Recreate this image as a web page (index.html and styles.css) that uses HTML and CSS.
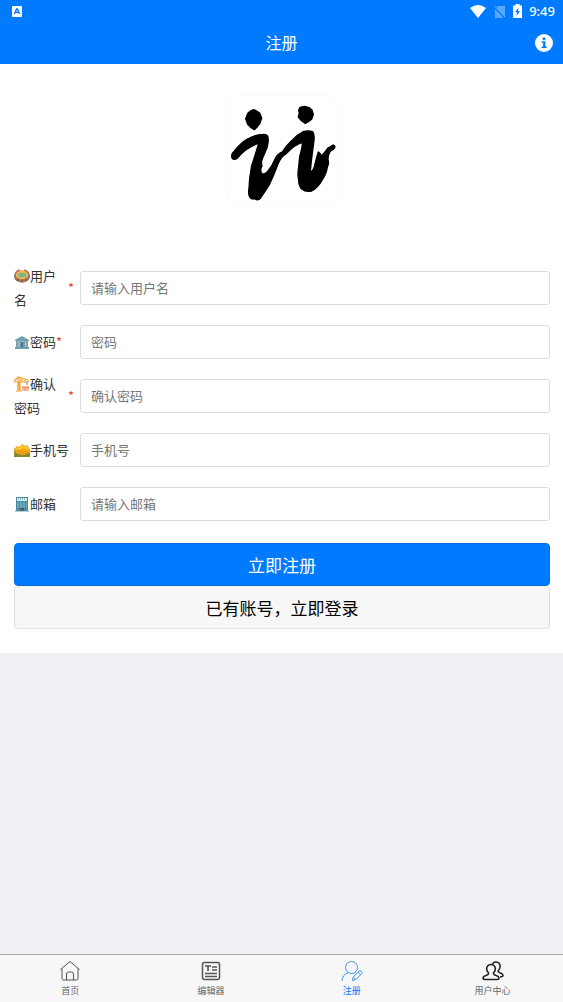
FILE: index.html
```html
<!DOCTYPE html>
<html lang="zh-CN">
<head>
  <meta charset="UTF-8">
  <meta name="viewport" content="width=device-width, initial-scale=1.0">
  <title>注册</title>
  <link rel="stylesheet" href="styles.css">
</head>
<body>
  <header class="header">
    <div class="status-bar">
      <svg class="status-app" width="10" height="11" viewBox="0 0 10 11">
        <rect width="10" height="11" rx="1" fill="#fff"/>
        <path d="M2.5 8 4.6 3h.8L7.5 8M3.4 6.4h3.2" fill="none" stroke="#007aff" stroke-width="1.4"/>
      </svg>
      <svg width="16" height="13" viewBox="0 0 16 13">
        <path d="M0 3Q8-3 16 3L8 13z" fill="#fff"/>
      </svg>
      <svg class="status-sim" width="11" height="13" viewBox="0 0 11 13">
        <path d="M4 1h7v12H1V4z" fill="#fff" opacity=".35"/>
        <path d="M0 1.5 11 13" stroke="#007aff" stroke-width="2"/>
        <path d="M0 .5 11 12" stroke="#fff" stroke-width="1" opacity=".4"/>
      </svg>
      <svg class="status-battery" width="9" height="14" viewBox="0 0 9 14">
        <path d="M0 1.5h2.5V0h4v1.5H9V14H0z" fill="#fff"/>
        <path d="M5.5 3.5 2 8.3h2L3.5 12 7 7H5z" fill="#007aff"/>
      </svg>
      <span class="time">9:49</span>
    </div>
    <div class="title-bar">
      <h1>注册</h1>
      <button class="info-button" type="button" aria-label="说明">
        <svg width="18" height="18" viewBox="0 0 18 18">
          <circle cx="9" cy="9" r="9" fill="#fff"/>
          <circle cx="9" cy="4.7" r="1.5" fill="#007aff"/>
          <path d="M6.7 7.2h3.7v5.2h1.3V14H6.6v-1.6h1.5V8.800H6.700z" fill="#007aff"/>
        </svg>
      </button>
    </div>
  </header>

  <main class="content">
    <svg class="logo" width="113" height="113" viewBox="33 27 339 339" role="img" aria-label="logo">
      <rect x="35" y="29" width="335" height="335" rx="45" fill="#fff" stroke="#f8f8f8" stroke-width="2"/>
      <g stroke="#000" stroke-width="4" stroke-linejoin="round">
        <path d="M117 74 125 78 134 84 140 99 135 115 127 125 118 134 107 127 98 118 92 101 99 84 108 77z"/>
        <path d="M255 67 268 64 283 68 291 75 295 88 290 103 279 111 271 115 258 106 250 96 253 84 251 76z"/>
        <path d="M50 212Q51 203 59 197 77 174 96 163 121 148 144 148 158 147 159 157 161 169 157 185 150 203 143 219 137 232 141 243 134 253 140 266 149 270 158 259 172 243 179 224 187 206 202 201 213 183 231 166 248 148 265 140 280 136 293 140 299 149 297 166L293 197 289 228 286 259Q292 262 298 245L305 217 310 201 316 206 319 213 330 201 339 189 354 180Q360 181 360 187 357 194 347 198 339 207 339 224 343 236 337 246 334 268 322 284 309 308 290 318 272 322 260 312 251 302 251 285 247 267 251 246L254 215 260 191 263 172Q239 178 214 206 198 214 188 239L177 268 163 299 149 321 137 339Q129 348 119 341 109 345 104 336 99 328 102 310L104 281 110 242 121 208 131 175Q112 180 91 196 80 205 70 216 63 225 54 222 49 219 50 212z"/>
      </g>
    </svg>

    <form class="register-form">
      <div class="form-row">
        <label for="username">
          <span>
            <svg class="emoji" viewBox="0 0 16 16">
              <ellipse cx="8" cy="8.4" rx="8" ry="6" fill="#637b87"/>
              <path d="M1 9h14q-1 5-7 5.4Q2 14 1 9z" fill="#d57042"/>
              <path d="M4 10v3M8 11v3M12 10v3" stroke="#48616f" stroke-width="1.4"/>
              <ellipse cx="8" cy="7" rx="6.2" ry="4.2" fill="#f9ba45"/>
              <ellipse cx="8" cy="7" rx="4.5" ry="2.5" fill="#7eb77f"/>
              <path d="M1 6.5Q2 3 6 2M15 6.5Q14 3 10 2" fill="none" stroke="#db604b" stroke-width="1.5"/>
            </svg>用户名</span><em>*</em>
        </label>
        <input type="text" id="username" name="username" placeholder="请输入用户名">
      </div>
      <div class="form-row">
        <label for="password">
          <span>
            <svg class="emoji" viewBox="0 0 16 16">
              <path d="M1 6 8 2l7 4v1H1zM1 13h14v2H1z" fill="#6e9fb0"/>
              <path d="M2 7h12v6H2z" fill="#a7c6d0"/>
              <path d="M3 7v6M6 7v6M10 7v6M13 7v6" stroke="#638b9b" stroke-width="1.2"/>
              <path d="M7 8h2v5H7z" fill="#52717e"/>
            </svg>密码</span><em>*</em>
        </label>
        <input type="password" id="password" name="password" placeholder="密码">
      </div>
      <div class="form-row">
        <label for="confirm">
          <span>
            <svg class="emoji" viewBox="0 0 16 16">
              <path d="M0 5 4 1l10 3v2H0zM4 1v14M6 2v13M4 6l2 2-2 2 2 2-2 2M8 3v3M11 4v2M2 15h6" fill="none" stroke="#f5a03c" stroke-width="1.2"/>
              <path d="M13 6v3" stroke="#70848d"/>
              <path d="M8 10h7v5H8z" fill="#f8c1a5"/>
              <path d="M8 12h7M10 10v2M13 10v2M11 12v3" stroke="#e48669" stroke-width=".7"/>
            </svg>确认密码</span><em>*</em>
        </label>
        <input type="password" id="confirm" name="confirm" placeholder="确认密码">
      </div>
      <div class="form-row">
        <label for="phone">
          <span>
            <svg class="emoji" viewBox="0 0 16 16">
              <path d="M0 7 3 4l2 1 3-3 3 2 2-1 2 3 1 2v6H0z" fill="#f5a713"/>
              <path d="M2 7l2-1 2 1 2-3 2 2 2-1 2 3" fill="none" stroke="#ffcf36" stroke-width="1.4"/>
              <path d="M0 8l2 3 3 1 4 1 4-1 3-2v5H0z" fill="#858a31"/>
              <path d="M4 11l3-2 3 3M12 8v4" fill="none" stroke="#d98b16"/>
            </svg>手机号</span>
        </label>
        <input type="tel" id="phone" name="phone" placeholder="手机号">
      </div>
      <div class="form-row">
        <label for="email">
          <span>
            <svg class="emoji" viewBox="0 0 16 16">
              <path d="M2 1h12v14H2z" fill="#4b8ba1"/>
              <path d="M3 2h10v3H3z" fill="#d9edf2"/>
              <path d="M4 3h8" stroke="#568b9e" stroke-dasharray="1 1"/>
              <path d="M3 7h10M3 9h10M3 11h10" stroke="#8fc4d4" stroke-dasharray="2 1"/>
              <path d="M6 12h4v3H6z" fill="#315e70"/>
              <path d="M1 15h14" stroke="#6a9bab"/>
            </svg>邮箱</span>
        </label>
        <input type="email" id="email" name="email" placeholder="请输入邮箱">
      </div>

      <div class="actions">
        <button class="btn btn-primary" type="submit">立即注册</button>
        <button class="btn btn-default" type="button">已有账号，立即登录</button>
      </div>
    </form>
  </main>

  <nav class="tab-bar">
    <a href="#home">
      <svg viewBox="0 0 22 22">
        <path d="M1.5 9.5 11 1.5l9.5 8M3 8.5v10Q3 20 4.5 20h13q1.500 0 1.500-1.500v-10M7.500 20v-6q0-2 2-2h3q2 0 2 2v6"/>
      </svg>
      <span>首页</span>
    </a>
    <a href="#editor">
      <svg viewBox="0 0 22 22">
        <rect x="2.5" y="2.5" width="17" height="17" rx="2" stroke-width="1.5"/>
        <path d="M5 6h6M8 6v5M12 7h5M12 10h5M5 13.500h12M5 16.500h12" stroke-width="1.7"/>
      </svg>
      <span>编辑器</span>
    </a>
    <a class="active" href="#register">
      <svg viewBox="0 0 22 22">
        <circle cx="10.5" cy="7.5" r="6"/>
        <path d="M1 21q0-6 6-8.300M11.500 20.500l.7-3.500 6-6q1-.8 2 .2l.6.600q.8 1 0 1.800l-6 6zM12.200 17l2.600 2.600M17 12.200l2.600 2.600"/>
      </svg>
      <span>注册</span>
    </a>
    <a class="user" href="#user">
      <svg viewBox="0 0 22 22">
        <path d="M6.500 13Q4 10.500 4.800 7.500 5.800 4.500 9 4.500t4.200 3Q14 10.500 11.500 13q-.5 1.500 2 2.200 3.500 1 3.500 2.800 0 1.500-2 1.500H3q-2 0-2-1.500 0-1.800 3.500-2.800 2.500-.7 2-2.200z"/>
        <path d="M10.500 4Q11.500 2 14 2q3 0 4 3 .7 3-1.700 5.500-.5 1.500 1.500 2.200 3.200 1 3.200 2.800 0 1.300-3 1.300"/>
      </svg>
      <span>用户中心</span>
    </a>
  </nav>
</body>
</html>
```
FILE: styles.css
```css
* {
  margin: 0;
  padding: 0;
  box-sizing: border-box;
}

body {
  font-family: "Noto Sans CJK SC", "Noto Sans", sans-serif;
  background: #efeff4;
  color: #333;
  min-height: 100vh;
  display: flex;
  flex-direction: column;
}

svg {
  display: block;
}

button {
  font-family: inherit;
  cursor: pointer;
}

.header {
  background: #007aff;
  color: #fff;
}

/* 状态栏 */
.status-bar {
  height: 24px;
  padding: 0 8px 2px 12px;
  display: flex;
  align-items: center;
}

.status-app {
  margin-right: auto;
}

.status-sim,
.status-battery {
  margin-left: 8px;
}

.time {
  margin-left: 7px;
  font-family: "Noto Sans", sans-serif;
  font-size: 13px;
  font-weight: 500;
}

.title-bar {
  height: 40px;
  padding: 0 10px 2px;
  display: grid;
  grid-template-columns: 1fr auto 1fr;
  align-items: center;
}

.title-bar h1 {
  grid-column: 2;
  font-size: 16px;
  font-weight: 400;
  line-height: 36px;
  padding-bottom: 2px;
}

.info-button {
  justify-self: end;
  border: none;
  background: none;
}

/* 注册表单 */
.content {
  background: #fff;
  padding: 30px 13px 24px 14px;
}

.logo {
  margin: 0 auto 57px;
}

.form-row {
  display: flex;
  align-items: center;
  min-height: 48px;
  margin-bottom: 6px;
}

.form-row label {
  width: 60px;
  margin-right: 6px;
  flex-shrink: 0;
  display: flex;
  align-items: center;
  font-size: 13px;
  line-height: 24px;
}

.form-row em {
  color: #e64330;
  font-style: normal;
}

.emoji {
  display: inline-block;
  width: 16px;
  height: 16px;
  vertical-align: -3px;
}

.form-row input {
  flex: 1;
  min-width: 0;
  height: 34px;
  padding: 0 10px 2px;
  border: 1px solid #ddd;
  border-radius: 3px;
  background: #fff;
  color: #333;
  font-family: inherit;
  font-size: 13px;
}

.form-row input::placeholder {
  color: #777;
}

.actions {
  margin-top: 15px;
}

.btn {
  display: block;
  width: 100%;
  height: 43px;
  padding-bottom: 1px;
  border: 1px solid #007aff;
  border-radius: 4px;
  font-size: 17px;
}

.btn-primary {
  background: #007aff;
  color: #fff;
  border-color: #0c70dd;
}

.btn-default {
  background: #f7f7f7;
  color: #000;
  border-color: #f0f0f0 #ddd #e4e4e4;
}

/* 底部导航 */
.tab-bar {
  margin-top: auto;
  height: 48px;
  border-top: 1px solid #aaa;
  background: #f7f7f7;
  display: grid;
  grid-template-columns: repeat(4, 1fr);
}

.tab-bar a {
  display: flex;
  flex-direction: column;
  align-items: center;
  padding-top: 5px;
  color: #666;
  font-size: 9px;
  line-height: 18px;
  text-decoration: none;
}

.tab-bar svg {
  width: 22px;
  height: 22px;
  fill: none;
  stroke: #555;
  stroke-width: 1;
}

.tab-bar .active {
  color: #007aff;
}

.tab-bar .active svg {
  stroke: #3b98e8;
}

.tab-bar .user svg {
  stroke: #222;
  stroke-width: 1.5;
}
```
